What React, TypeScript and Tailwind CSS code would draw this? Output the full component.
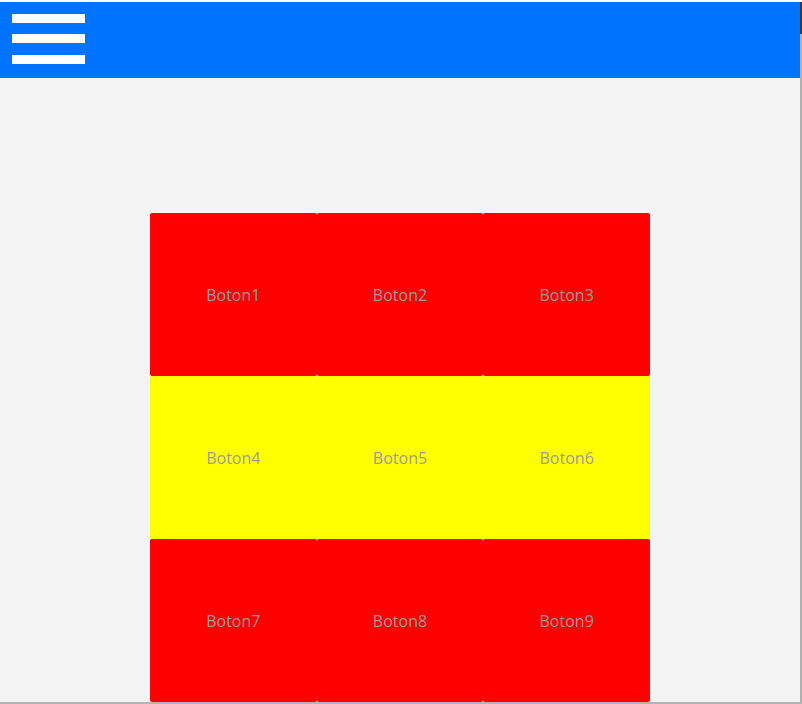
import React from "react";

const rows = [
  { color: "bg-[#ff0000]", labels: ["Boton1", "Boton2", "Boton3"] },
  { color: "bg-[#ffff00]", labels: ["Boton4", "Boton5", "Boton6"] },
  { color: "bg-[#ff0000]", labels: ["Boton7", "Boton8", "Boton9"] },
];

const App: React.FC = () => {
  return (
    <div className="w-[802px] h-[704px] bg-white flex flex-col border-b-2 border-[#b4b4b4] overflow-hidden">
      <div className="flex flex-1 pt-[2px]">
        <div className="w-[800px] flex flex-col">
          {/* Header */}
          <div className="h-[76px] bg-[#0073ff] pl-[12px] pt-[12px] flex flex-col">
            <div className="w-[73px] h-[9px] bg-white" />
            <div className="w-[73px] h-[9px] bg-white mt-[11px]" />
            <div className="w-[73px] h-[9px] bg-white mt-[12px]" />
          </div>

          {/* Content */}
          <div className="flex-1 bg-[#f3f3f3] pt-[135px]">
            <div className="w-[500px] mx-auto grid grid-cols-3">
              {rows.map((row) =>
                row.labels.map((label) => (
                  <button
                    key={label}
                    className={`${row.color} h-[163px] rounded-[2px] flex items-center justify-center text-[#9c9c9c] text-[16px] font-['Open_Sans',sans-serif]`}
                  >
                    {label}
                  </button>
                ))
              )}
            </div>
          </div>
        </div>
        <div className="w-[2px] flex flex-col">
          <div className="h-[32px] bg-[#3a3a3a]" />
          <div className="flex-1 bg-[#b0b0b0]" />
        </div>
      </div>
    </div>
  );
};

export default App;
